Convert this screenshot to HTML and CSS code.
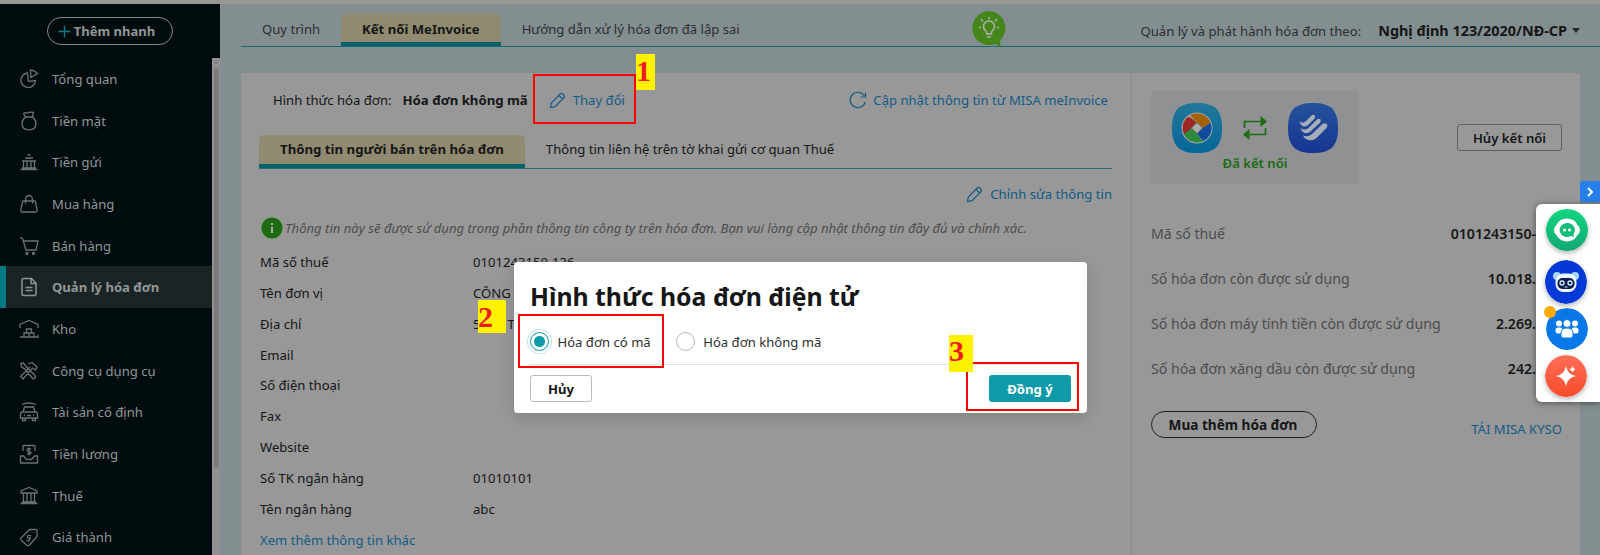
FILE: index.html
```html
<!DOCTYPE html>
<html lang="vi">
  <head>
    <meta charset="UTF-8" />
    <title>Kết nối MeInvoice</title>
    <link rel="stylesheet" href="styles.css">
  </head>
  <body>
    <div class="app">
      <aside class="sidebar">
        <div class="quick">
          <button class="btn-quick">
            <svg width="13" height="13" viewBox="0 0 13 13"><path d="M6.5 .5v12M.5 6.5h12" stroke="#087a85" stroke-width="1.4"/></svg>
            <span>Thêm nhanh</span>
          </button>
        </div>
        <div class="menu-wrap">
          <ul class="menu">
            <li><svg viewBox="0 0 20 20"><path d="M8.500 4A7.300 7.300 0 1 0 16.500 11.500L9.500 12.500zM11.500 1l.3 7.500 6.700-4Q16 1.500 11.500 1z"/></svg><span>Tổng quan</span></li>
            <li><svg viewBox="0 0 20 20"><path d="M6.500 6L4.500 2.500q2-1.500 4-.5 2-1.500 6-.5L13.500 6zM6.500 6C3.500 8.500 3 10 3 12.500c0 4 2.500 6.300 7 6.300s7-2.300 7-6.300C17 10 16.500 8.500 13.500 6"/></svg><span>Tiền mặt</span></li>
            <li><svg viewBox="0 0 20 20"><path d="M8.500 3h3M6 6h8M3 9h14M4.500 9v7.500M8 9v7.500M12 9v7.500M15.500 9v7.500M1.500 17.500h17M3 16h14"/></svg><span>Tiền gửi</span></li>
            <li><svg viewBox="0 0 20 20"><path d="M4.500 7h11q.7 0 1 1l1.700 8.500q0 1.500-1.500 1.500H3.300q-1.500 0-1.500-1.500L3.500 8q.3-1 1-1zM6.500 9.500V5.500a3.500 4 0 0 1 7 0v4"/></svg><span>Mua hàng</span></li>
            <li><svg viewBox="0 0 20 20"><path d="M1 1.500l2.500 1L7 14h10l2-9H4.500"/><circle cx="8" cy="17.500" r="1" /><circle cx="14.500" cy="17.500" r="1"/></svg><span>Bán hàng</span></li>
            <li class="active"><svg viewBox="0 0 20 20"><path d="M5 1.500h7.500L17 6v11q0 1.500-1.500 1.500h-11Q3 18.500 3 17V3.500Q3 1.500 5 1.500zM12 2v4.500h5M6.500 10.500h7M6.500 13.500h7"/></svg><span>Quản lý hóa đơn</span></li>
            <li><svg viewBox="0 0 20 20"><path d="M1 9V5.500L10 1.500l9 4V9M1 18h18v-2M7.500 10h5v4h-5zM5 14h5v4H5zM10 14h5v4h-5z"/></svg><span>Kho</span></li>
            <li><svg viewBox="0 0 20 20"><path d="M2 2.500l2.500-.5 3 4L16 14.500a2 2 0 0 1-2.500 3L6 8 2.500 6zM9 3l4-1.500 5 4.500-1.500 3-3-2L4 18 1.500 15.500 11 6"/></svg><span>Công cụ dụng cụ</span></li>
            <li><svg viewBox="0 0 20 20"><path d="M3 2.500q7-3 14 0M5.500 5h9l1.500 5H4zM4 10Q1.500 10 1.500 12v4h17v-4q0-2-2.500-2M3.500 16v2.500h3V16M13.500 16v2.500h3V16M5 13h1M14 13h1M8 13.500h4"/></svg><span>Tài sản cố định</span></li>
            <li><svg viewBox="0 0 20 20"><path d="M4 7V2.500q0-1 1-1h10q1 0 1 1V7M1.500 12v7h17v-7h-3l-3 3.500h-5L4.500 12zM12 5q-4-1-4 1 0 1 2 1.500t2 1.500q0 1.500-4 .7M10 3.500v8"/></svg><span>Tiền lương</span></li>
            <li><svg viewBox="0 0 20 20"><path d="M2 7V5l8-3.500L18 5v2zM4.500 7v9M8 7v9M12 7v9M15.500 7v9M1.500 17.500h17M3 16h14"/></svg><span>Thuế</span></li>
            <li><svg viewBox="0 0 20 20"><path d="M10.500 2.500h6.500q1 0 1 1V9.500l-8 9q-1 .5-2 0l-6-5.500q-.8-1 0-2zM12.500 9q-4-1.500-4 .5t2 1.500-1 3l-2-1M15 5v.8"/></svg><span>Giá thành</span></li>
          </ul>
          <div class="scrollbar"><i class="scroll-up"></i><div class="thumb"></div></div>
        </div>
      </aside>

      <main class="main">
        <header class="topbar">
          <nav class="tabs">
            <a class="tab">Quy trình</a>
            <a class="tab active">Kết nối MeInvoice</a>
            <a class="tab">Hướng dẫn xử lý hóa đơn đã lập sai</a>
          </nav>
          <svg class="tip" width="36" height="38" viewBox="0 0 36 38">
            <path d="M18 1a17 17 0 1 0 6 33l5.500 3-.5-6.500A17 17 0 0 0 18 1z" fill="#45851a"/>
            <path d="M15.500 24v-2.500q-3-2-3-5a5.500 5.500 0 0 1 11 0q0 3-3 5V24zM16 27h4M18 7v2.500M10 9l2 2.500M26 9l-2 2.500M8 17.500h2M26 17.500h2" fill="none" stroke="#a9b2a4" stroke-width="1.500"/>
          </svg>
          <div class="decree">
            <span>Quản lý và phát hành hóa đơn theo:</span>
            <b>Nghị định 123/2020/NĐ-CP</b>
            <i class="caret"></i>
          </div>
        </header>

        <div class="card">
          <section class="seller">
            <div class="form-type">
              <span>Hình thức hóa đơn:</span>
              <b>Hóa đơn không mã</b>
              <a class="link change"><svg width="17" height="17" viewBox="0 0 17 17"><path d="M1.500 15.500l.8-4.500L11.500 1.800q1-.8 2 0l1.700 1.700q.8 1 0 2L6 14.700zM10 3.300l3.700 3.700"/></svg>Thay đổi</a>
              <a class="link refresh"><svg width="18" height="18" viewBox="0 0 18 18"><path d="M16.300 11A7.700 7.700 0 1 1 15.500 5M16.500 1.500V6h-5"/></svg>Cập nhật thông tin từ MISA meInvoice</a>
            </div>
            <nav class="subtabs">
              <a class="subtab active">Thông tin người bán trên hóa đơn</a>
              <a class="subtab">Thông tin liên hệ trên tờ khai gửi cơ quan Thuế</a>
            </nav>
            <div class="edit-row">
              <a class="link"><svg width="17" height="17" viewBox="0 0 17 17"><path d="M1.500 15.500l.8-4.500L11.500 1.800q1-.8 2 0l1.700 1.700q.8 1 0 2L6 14.700zM10 3.300l3.700 3.700"/></svg>Chỉnh sửa thông tin</a>
            </div>
            <div class="note">
              <svg width="22" height="22" viewBox="0 0 22 22"><circle cx="11" cy="11" r="10.600" fill="#1d6b12"/><path d="M11 6v2M11 9.500V16" stroke="#a5aea3" stroke-width="2"/></svg>
              <em>Thông tin này sẽ được sử dụng trong phần thông tin công ty trên hóa đơn. Bạn vui lòng cập nhật thông tin đầy đủ và chính xác.</em>
            </div>
            <dl class="info">
              <dt>Mã số thuế</dt><dd>0101243150-136</dd>
              <dt>Tên đơn vị</dt><dd>CÔNG</dd>
              <dt>Địa chỉ</dt><dd class="address"><span>5</span><span>T</span></dd>
              <dt>Email</dt><dd></dd>
              <dt>Số điện thoại</dt><dd></dd>
              <dt>Fax</dt><dd></dd>
              <dt>Website</dt><dd></dd>
              <dt>Số TK ngân hàng</dt><dd>01010101</dd>
              <dt>Tên ngân hàng</dt><dd>abc</dd>
              <dt class="more">Xem thêm thông tin khác</dt>
            </dl>
          </section>

          <section class="connect">
            <div class="connect-head">
              <div class="linked">
                <div class="logos">
                  <svg width="50" height="50" viewBox="0 0 50 50">
                    <defs><linearGradient id="cyan" x1="0" y1="0" x2="0" y2="1"><stop offset="0" stop-color="#237799"/><stop offset="1" stop-color="#04669a"/></linearGradient></defs>
                    <path d="M25 0C43 0 50 7 50 25S43 50 25 50 0 43 0 25 7 0 25 0z" fill="url(#cyan)"/>
                    <circle cx="25" cy="25" r="15.500" fill="#a2a9ac"/>
                    <!-- four blades round the white diamond -->
                    <path d="M29.500 24L20 15.500 16 13.700A14.500 14.500 0 0 0 12 31.500L15.500 29.500 25 19.500z" fill="#9c2925"/>
                    <path d="M19.500 25L12 31.500A14.500 14.500 0 0 0 30.500 38.400L25 30.500z" fill="#2f8b3b"/>
                    <path d="M25 30.500L31 38.200A14.500 14.500 0 0 0 38.500 19.500L30.500 25z" fill="#104c9b"/>
                    <path d="M30.500 25L38.500 19.500A14.500 14.500 0 0 0 18 12.300L25 19.500z" fill="#a36206"/>
                    <path d="M25 19.500l5.500 5.500-5.500 5.500-5.500-5.500z" fill="#adadad" stroke="#555" stroke-width=".7"/>
                  </svg>
                  <svg width="24" height="24" viewBox="0 0 24 24"><path d="M1.500 12V5.500h16M22.500 12v6.500h-16" fill="none" stroke="#1d6b12" stroke-width="1.700"/><path d="M17.500 0v11l6.500-5.500zM6.500 13v11L0 18.500z" fill="#1d6b12"/></svg>
                  <svg width="50" height="50" viewBox="0 0 50 50">
                    <defs><linearGradient id="blue" x1="0" y1="0" x2="0" y2="1"><stop offset="0" stop-color="#24539b"/><stop offset="1" stop-color="#173593"/></linearGradient></defs>
                    <path d="M25 0C43 0 50 7 50 25S43 50 25 50 0 43 0 25 7 0 25 0z" fill="url(#blue)"/>
                    <g fill="#a7adb8">
                      <path d="M11.500 18q3 3 6 .5l6-6q2-1.500 3.300 0 .8 1.500-.3 3l-6 6q-3 3-6 1.500-2.500-1.500-3-5z"/>
                      <path d="M12.500 25q4 3 8 0l8.500-8.500q2-1.700 3.500 0 1 1.500-.5 3.300L23 28q-3.500 3.300-7 1.800-3-1.800-3.500-4.800z"/>
                      <path d="M15 32.500q5 2 9-1.500l10.500-10q2.300-1.500 4.500 0 1.200 2-.5 4L28.500 35q-3.500 3-8 2-4-1-5.500-4.500z"/>
                    </g>
                  </svg>
                </div>
                <p>Đã kết nối</p>
              </div>
              <button class="btn-cut">Hủy kết nối</button>
            </div>
            <ul class="quota">
              <li><span>Mã số thuế</span><b>0101243150-</b></li>
              <li><span>Số hóa đơn còn được sử dụng</span><b>10.018.</b></li>
              <li><span>Số hóa đơn máy tính tiền còn được sử dụng</span><b>2.269.</b></li>
              <li><span>Số hóa đơn xăng dầu còn được sử dụng</span><b>242.</b></li>
            </ul>
            <div class="buy">
              <button class="btn-buy">Mua thêm hóa đơn</button>
              <a class="link">TẢI MISA KYSO</a>
            </div>
          </section>
        </div>
      </main>
    </div>

    <div class="modal">
      <h1>Hình thức hóa đơn điện tử</h1>
      <div class="radios">
        <label><i class="radio checked"></i>Hóa đơn có mã</label>
        <label><i class="radio"></i>Hóa đơn không mã</label>
      </div>
      <div class="modal-foot">
        <button class="btn-cancel">Hủy</button>
        <button class="btn-ok">Đồng ý</button>
      </div>
    </div>

    <div class="dock-toggle"><svg width="8" height="10" viewBox="0 0 8 10"><path d="M2 1l4 4-4 4" fill="none" stroke="#fff" stroke-width="2"/></svg></div>
    <div class="dock">
      <svg class="dock-chat" width="42" height="42" viewBox="0 0 42 42">
        <defs><linearGradient id="green" x1="0" y1="0" x2="0" y2="1"><stop offset="0" stop-color="#12d580"/><stop offset="1" stop-color="#13a873"/></linearGradient></defs>
        <rect width="42" height="42" rx="19" fill="url(#green)"/>
        <path d="M21 9.500q8 0 10.500 6.500 2.500 1.500 2.500 5t-2.500 5Q28 32.500 21 32.500T10.500 26Q8 24.500 8 21t2.500-5Q13 9.500 21 9.500z" fill="#fff"/>
        <path d="M21 14a7.500 7 0 1 0 4 13l3 1-.5-3A7.500 7 0 0 0 21 14z" fill="#12bd78"/>
        <circle cx="18.500" cy="21" r="1.600" fill="#fff"/><circle cx="23.500" cy="21" r="1.600" fill="#fff"/>
      </svg>
      <svg class="dock-bot" width="42" height="44" viewBox="0 0 42 44">
        <ellipse cx="21" cy="22" rx="21" ry="22" fill="#0439d8"/>
        <circle cx="12" cy="16" r="4" fill="#a7d8fa"/><circle cx="30" cy="16" r="4" fill="#a7d8fa"/>
        <rect x="10.500" y="13.500" width="21" height="18.500" rx="8" fill="#eef7ff"/>
        <rect x="12.500" y="18" width="17" height="11" rx="5" fill="#0b1d4d"/>
        <circle cx="17" cy="23" r="2" fill="none" stroke="#d9ecff" stroke-width="1.300"/><circle cx="25" cy="23" r="2" fill="none" stroke="#d9ecff" stroke-width="1.300"/>
        <path d="M19.500 27h3" stroke="#d9ecff"/>
      </svg>
      <svg class="dock-team" width="42" height="42" viewBox="0 0 42 42">
        <circle cx="21" cy="21" r="21" fill="#0878e8"/>
        <g fill="#fff"><circle cx="13" cy="15.500" r="3"/><circle cx="29" cy="15.500" r="3"/><rect x="9.500" y="19.500" width="7" height="6" rx="2.500"/><rect x="25.500" y="19.500" width="7" height="6" rx="2.500"/></g>
        <g fill="#fff" stroke="#0878e8"><circle cx="21" cy="15.500" r="4"/><path d="M15 28v-3q0-5 6-5t6 5v3q0 2-2 2h-8q-2 0-2-2z"/></g>
      </svg>
      <svg class="dock-ai" width="42" height="42" viewBox="0 0 42 42">
        <defs><linearGradient id="red" x1="0" y1="0" x2="0" y2="1"><stop offset="0" stop-color="#ff6e57"/><stop offset="1" stop-color="#f84b2b"/></linearGradient></defs>
        <circle cx="21" cy="21" r="21" fill="url(#red)"/>
        <path d="M21 11q1.500 8.500 10 10-8.500 1.500-10 10-1.500-8.500-10-10 8.500-1.500 10-10zM27.500 11q.7 2.700 3 3.300-2.300.7-3 3.300-.7-2.600-3-3.300 2.300-.6 3-3.300z" fill="#fff"/>
      </svg>
      <i class="badge"></i>
    </div>

    <!-- step markers -->
    <div class="frame frame-1"></div>
    <div class="frame frame-2"></div>
    <div class="frame frame-3"></div>
    <div class="step step-1">1</div>
    <div class="step step-2">2</div>
    <div class="step step-3">3</div>
  </body>
</html>
```
FILE: styles.css
```css
* {
  box-sizing: border-box;
}

body {
  margin: 0;
  height: 555px;
  overflow: hidden;
  position: relative;
  font-family: "Noto Sans", sans-serif;
  font-size: 13.1px;
  line-height: 20px;
  color: #151616;
  background: #828e90;
  border-top: 4px solid #999696;
}

ul, dl, dd, p, h1 {
  list-style: none;
  margin: 0;
  padding: 0;
}

button {
  font: inherit;
  font-weight: 700;
  color: inherit;
  background: none;
  padding: 0;
  white-space: nowrap;
}

svg {
  flex: none;
}

.app {
  display: flex;
  height: 551px;
  white-space: nowrap;
}

/* sidebar */
.sidebar {
  width: 220px;
  flex: none;
  background: #010c0e;
  color: #929696;
}

.quick {
  height: 54px;
  padding: 13px 0 0 47px;
}

.btn-quick {
  width: 126px;
  height: 28px;
  display: flex;
  align-items: center;
  justify-content: center;
  gap: 3px;
  padding-right: 7px;
  border: 1.5px solid #858989;
  border-radius: 14px;
  font-size: 13px;
}

.menu-wrap {
  display: flex;
  height: 497px;
  overflow: hidden;
}

.menu {
  flex: 1;
}

.menu li {
  height: 41.7px;
  display: flex;
  align-items: center;
  gap: 13px;
  padding-left: 19px;
}

.menu svg {
  width: 20px;
  height: 20px;
  fill: none;
  stroke: #6c7171;
  stroke-width: 1.3;
}

.menu .active {
  background: #1b2425;
  border-left: 6px solid #037983;
  padding-left: 13px;
  font-weight: 700;
}

.menu .active svg {
  stroke: #8d9292;
  stroke-width: 1.5;
}

.scrollbar {
  width: 8px;
  background: #929090;
  padding-top: 3px;
}

.scroll-up {
  display: block;
  margin: 0 auto 4px;
  width: 0;
  border: 2.5px solid transparent;
  border-top: 0;
  border-bottom: 3px solid #777;
}

.thumb {
  width: 5px;
  height: 400px;
  margin: 0 auto;
  border-radius: 3px;
  background: #7c7b7c;
}

/* main */
.main {
  flex: 1;
  min-width: 0;
  padding-left: 21px;
}

.topbar {
  display: flex;
  height: 43px;
  border-bottom: 1px solid #176c70;
}

.tabs {
  display: flex;
  width: 730px;
  padding-top: 10px;
}

.tab {
  height: 32px;
  padding: 5px 21px;
  color: #2b2f30;
}

.tab.active, .subtab.active {
  background: #908b70;
  border-bottom: 4px solid #04626a;
  border-radius: 5px 5px 0 0;
  font-weight: 700;
  color: #151616;
}

.tip {
  margin-top: 6px;
  position: relative;
}

.decree {
  display: flex;
  align-items: center;
  margin-left: auto;
  padding: 11px 20px 0 0;
  color: #2b2f30;
}

.decree b {
  margin-left: 17px;
  font-size: 14.4px;
  font-weight: 700;
  color: #151616;
}

.caret {
  margin-left: 5px;
  border: 4px solid transparent;
  border-top: 5px solid #26292a;
  border-bottom: 0;
}

.card {
  display: flex;
  height: 482px;
  margin: 26px 20px 0 0;
  background: #989898;
}

.seller {
  width: 891px;
  padding: 17px 19px 0 18px;
  border-right: 1px solid #8b8b8b;
}

.form-type {
  display: flex;
  padding: 0 4px 0 14px;
}

.form-type b {
  margin-left: 11px;
  font-size: 13.2px;
  font-weight: 700;
}

.link {
  display: flex;
  align-items: center;
  color: #155b86;
}

.link svg {
  margin-right: 7px;
  fill: none;
  stroke: currentColor;
  stroke-width: 1.2;
}

.change {
  margin-left: 21px;
}

.refresh {
  margin-left: auto;
}

.refresh svg {
  margin-right: 6px;
}

.subtabs {
  display: flex;
  margin-top: 25px;
  height: 34px;
  border-bottom: 1px solid #2c6b75;
}

.subtab {
  height: 33px;
  padding: 4px 21px;
}

.subtab.active {
  font-size: 13.22px;
}

.edit-row {
  display: flex;
  justify-content: flex-end;
  padding-top: 15px;
}

.note {
  display: flex;
  align-items: center;
  gap: 2px;
  margin: 13px 0 0 2px;
  color: #4d4d4d;
}

.info {
  display: grid;
  grid-template-columns: 213px 1fr;
  grid-auto-rows: 30.85px;
  line-height: 30.85px;
  margin-top: 8px;
  margin-left: 1px;
}

.address {
  display: flex;
  gap: 27px;
}

.more {
  color: #155b86;
}

/* right column */
.connect {
  flex: 1;
  padding: 18px 18px 0 19px;
}

.connect-head {
  display: flex;
  justify-content: space-between;
  align-items: flex-start;
}

.linked {
  width: 208px;
  height: 93px;
  padding-top: 12px;
  border-radius: 4px;
  background: #909193;
  text-align: center;
}

.logos {
  display: flex;
  align-items: center;
  justify-content: center;
  gap: 21px;
}

.linked p {
  color: #1d6b12;
  font-weight: 600;
}

.btn-cut {
  width: 105px;
  height: 27px;
  margin-top: 33px;
  border: 1px solid #5c6464;
  border-radius: 3px;
  font-weight: 600;
}

.quota {
  margin-top: 27px;
  font-size: 14.13px;
}

.quota li {
  display: flex;
  justify-content: space-between;
  height: 45px;
  line-height: 45px;
  padding-right: 26px;
}

.quota span {
  color: #4d4d4d;
}

.quota b {
  font-weight: 600;
}

.buy {
  display: flex;
  justify-content: space-between;
  align-items: flex-start;
  margin-top: 20px;
}

.buy .link {
  padding-top: 8px;
}

.btn-buy {
  width: 166px;
  height: 27px;
  padding: 1px 2px 0 0;
  border: 1.5px solid #1e2020;
  border-radius: 14px;
  font-size: 13.6px;
}

/* modal */
.modal {
  position: absolute;
  left: 514px;
  top: 258px;
  width: 573px;
  height: 151px;
  padding: 0 16px;
  border-radius: 4px;
  background: #fff;
  box-shadow: 0 5px 16px rgba(0, 0, 0, .14);
}

.modal h1 {
  padding-top: 16px;
  font-size: 24.8px;
  line-height: 36px;
  font-weight: 700;
}

.radios {
  display: flex;
  gap: 25px;
  height: 51px;
  padding-top: 5px;
  border-bottom: 1px solid #e2e2e2;
}

.radios label {
  display: flex;
  align-items: center;
  gap: 8.5px;
  color: #2e3131;
}

.radio {
  width: 19px;
  height: 19px;
  border: 1px solid #b5b8b8;
  border-radius: 50%;
}

.radio.checked {
  border-color: #0e9aa9;
  background: radial-gradient(circle, #0e9aa9 5px, #fff 6px);
  box-shadow: 0 0 0 2px #fff, 0 0 0 3px #bfe3e8;
}

.modal-foot {
  display: flex;
  justify-content: space-between;
  padding-top: 10px;
}

.btn-cancel {
  width: 62px;
  height: 27px;
  border: 1px solid #b8bbbb;
  border-radius: 3px;
}

.btn-ok {
  width: 82px;
  height: 27px;
  border: 0;
  border-radius: 3px;
  background: #0e9aa9;
  color: #fff;
}

/* support dock */
.dock-toggle {
  position: absolute;
  right: 0;
  top: 177px;
  width: 20px;
  height: 21px;
  border-radius: 3px 0 0 3px;
  background: #2680eb;
  display: flex;
  align-items: center;
  justify-content: center;
}

.dock {
  position: absolute;
  right: 0;
  top: 200px;
  width: 64px;
  height: 198px;
  padding: 5px 0 0 9px;
  border-radius: 6px 0 0 6px;
  background: #fff;
  box-shadow: 0 1px 6px rgba(0, 0, 0, .5);
  display: flex;
  flex-direction: column;
}

.dock svg {
  border-radius: 50%;
  box-shadow: 0 2px 5px rgba(0, 0, 0, .3);
}

.dock-chat {
  margin: 0 0 9px 1px;
}

.dock .dock-team {
  margin: 4px 0 5px 1px;
  box-shadow: none;
}

.badge {
  position: absolute;
  left: 8px;
  top: 102px;
  width: 12px;
  height: 12px;
  border-radius: 50%;
  background: #ffa90a;
}

/* step markers */
.frame {
  position: absolute;
  border: 2px solid #f00;
}

.frame-1 {
  left: 533px;
  top: 70px;
  width: 103px;
  height: 50px;
}

.frame-2 {
  left: 518px;
  top: 310px;
  width: 146px;
  height: 54px;
}

.frame-3 {
  left: 966px;
  top: 358px;
  width: 113px;
  height: 49px;
}

.step {
  position: absolute;
  background: #fff200;
  color: #ed1c24;
  font: bold 30px/34px "Liberation Serif", serif;
}

.step-1 {
  left: 636px;
  top: 50px;
  width: 19px;
  height: 36px;
}

.step-2 {
  left: 478px;
  top: 296px;
  width: 28px;
  height: 33px;
  line-height: 33px;
}

.step-3 {
  left: 949px;
  top: 331px;
  width: 24px;
  height: 37px;
  line-height: 32px;
}
```
